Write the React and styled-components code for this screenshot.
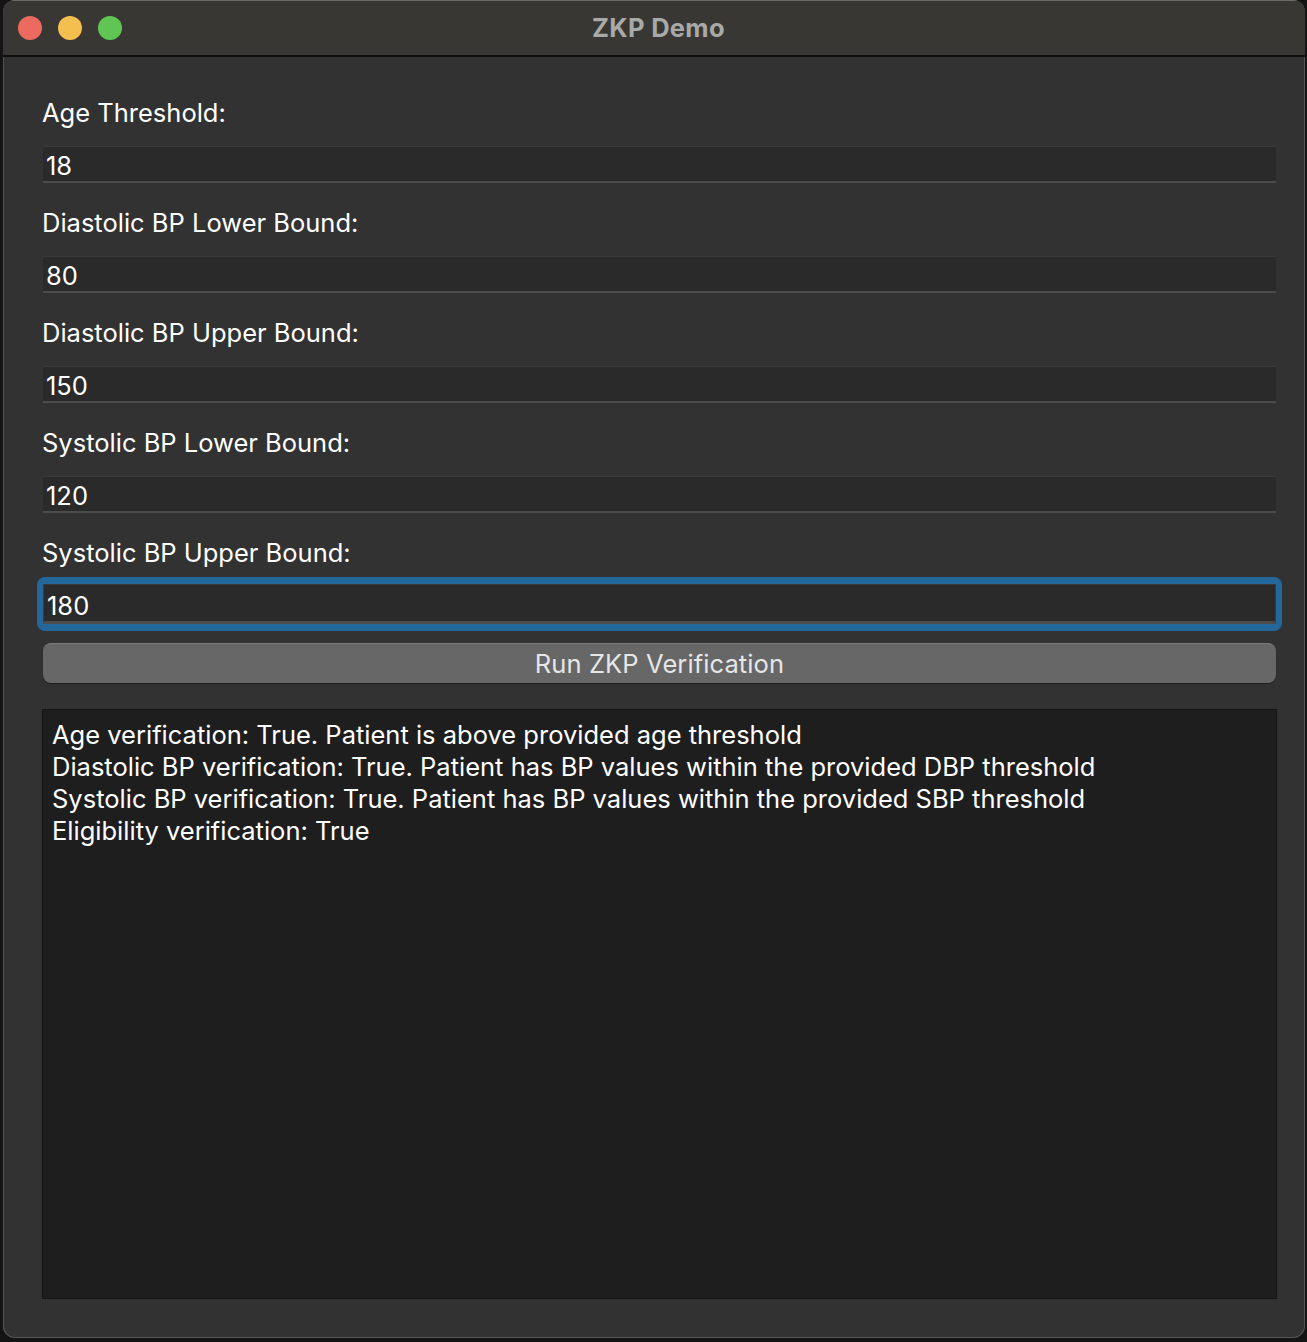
import React from "react";
import styled, { createGlobalStyle } from "styled-components";

const Global = createGlobalStyle`
  html, body { margin: 0; padding: 0; background: #141414; }
  body { font-family: Inter, "Noto Sans", "Liberation Sans", sans-serif; }
  * { box-sizing: border-box; }
`;

const Screen = styled.div`
  width: 1307px;
  height: 1342px;
  padding: 0 2px 4px 3px;
  background: #141414;
  display: flex;
`;

const Window = styled.div`
  flex: 1;
  display: flex;
  flex-direction: column;
  border-radius: 12px;
  overflow: hidden;
  background: #323232;
  box-shadow: inset 0 0 0 1px #555;
`;

const TitleBar = styled.div`
  height: 57px;
  flex: none;
  display: grid;
  grid-template-columns: 1fr auto 1fr;
  align-items: center;
  padding: 0 16px 1px 15px;
  background: #383734;
  border-bottom: 2px solid #0e0e0e;
  border-top: 1px solid #6b6b68;
`;

const Lights = styled.div`
  display: flex;
  gap: 16px;
`;

const Light = styled.span`
  width: 24px;
  height: 24px;
  border-radius: 50%;
  background: ${(p) => p.$c};
`;

const Title = styled.div`
  font-size: 25.5px;
  font-weight: 700;
  color: #a9a9a7;
  letter-spacing: 0.3px;
  padding-left: 10px;
`;

const Content = styled.div`
  flex: 1;
  display: flex;
  flex-direction: column;
  padding: 38px 27px 39px 39px;
`;

const Form = styled.div`
  display: flex;
  flex-direction: column;
  gap: 22px;
`;

const Field = styled.div`
  display: flex;
  flex-direction: column;
`;

const Label = styled.div`
  font-size: 25.5px;
  color: #ffffff;
  height: 36px;
  line-height: 36px;
  margin-bottom: 15px;
`;

const InputWrap = styled.div`
  margin: 0 2px 0 1px;
  border-radius: 8px;
  ${(p) =>
    p.$focused &&
    `
    margin: -9px -4px -8px -5px;
    padding: 7px 6px 7px 6px;
    background: #24679a;
  `}
`;

const Input = styled.div`
  height: 37px;
  background: #2a2a2a;
  border-top: 1px solid #3a3a3a;
  border-bottom: 2px solid #4c4c4c;
  font-size: 25.5px;
  color: #ffffff;
  line-height: 37px;
  padding-left: 3px;
  ${(p) =>
    p.$focused &&
    `border-left: 1px solid #3a3a3a; border-right: 1px solid #3a3a3a; border-bottom-width: 3px; height: 40px; line-height: 42px;`}
`;

const Button = styled.div`
  margin: 20px 2px 0 1px;
  height: 40px;
  border-radius: 8px;
  background: #676767;
  border-top: 1px solid #7a7a7a;
  box-shadow: 0 1px 1px rgba(0, 0, 0, 0.4);
  display: flex;
  align-items: center;
  justify-content: center;
  font-size: 25.5px;
  color: #e6e6e6;
  letter-spacing: 0.1px;
`;

const Output = styled.div`
  flex: 1;
  margin: 26px 1px 0 0;
  background: #1e1e1e;
  border: 1px solid #151515;
  padding: 9px 9px;
  font-size: 25.5px;
  line-height: 32px;
  color: #ffffff;
  white-space: pre-line;
`;

const fields = [
  ["Age Threshold:", "18"],
  ["Diastolic BP Lower Bound:", "80"],
  ["Diastolic BP Upper Bound:", "150"],
  ["Systolic BP Lower Bound:", "120"],
  ["Systolic BP Upper Bound:", "180"],
];

const output = [
  "Age verification: True. Patient is above provided age threshold",
  "Diastolic BP verification: True. Patient has BP values within the provided DBP threshold",
  "Systolic BP verification: True. Patient has BP values within the provided SBP threshold",
  "Eligibility verification: True",
].join("\n");

export default function App() {
  return (
    <>
      <Global />
      <Screen>
        <Window>
          <TitleBar>
            <Lights>
              <Light $c="#ed6a5e" />
              <Light $c="#f5bf4f" />
              <Light $c="#61c554" />
            </Lights>
            <Title>ZKP Demo</Title>
            <div />
          </TitleBar>
          <Content>
            <Form>
              {fields.map(([l, v], i) => {
                const focused = i === fields.length - 1;
                return (
                  <Field key={l}>
                    <Label>{l}</Label>
                    <InputWrap $focused={focused}>
                      <Input $focused={focused}>{v}</Input>
                    </InputWrap>
                  </Field>
                );
              })}
            </Form>
            <Button>Run ZKP Verification</Button>
            <Output>{output}</Output>
          </Content>
        </Window>
      </Screen>
    </>
  );
}
